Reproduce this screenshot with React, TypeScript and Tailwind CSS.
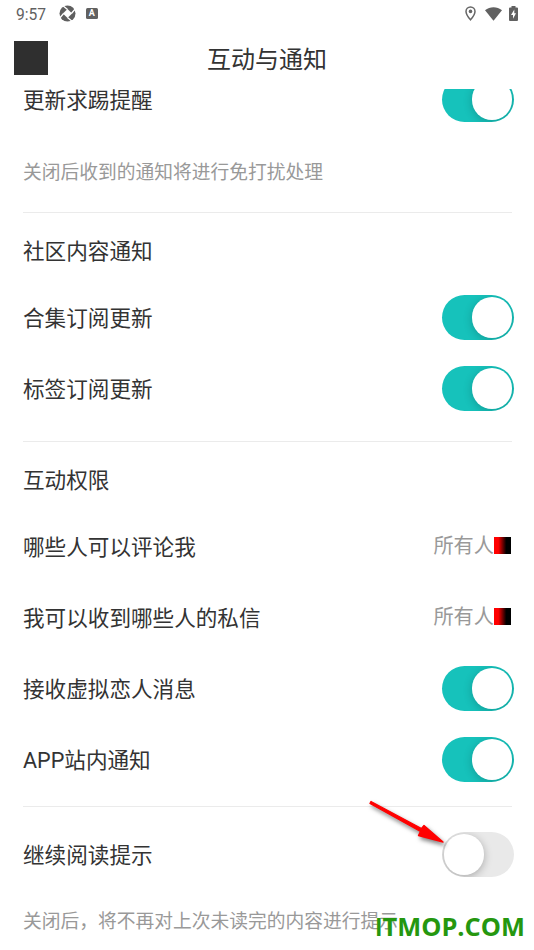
import React from "react";
import clsx from "clsx";

const Toggle: React.FC<{ defaultOn?: boolean }> = ({ defaultOn = false }) => {
  const [on, setOn] = React.useState(defaultOn);
  return (
    <button
      role="switch"
      aria-checked={on}
      onClick={() => setOn(!on)}
      className={clsx(
        "flex h-[44.5px] w-[72.5px] shrink-0 items-center overflow-hidden rounded-full px-[2px]",
        on ? "justify-end bg-[#16c2bb]" : "justify-start bg-[#e9e9e9]"
      )}
    >
      <span
        className={clsx(
          "size-[40.5px] rounded-full bg-white",
          on
            ? "shadow-[0_2px_10px_rgba(0,0,0,0.2)]"
            : "shadow-[0_2px_9px_rgba(0,0,0,0.28)]"
        )}
      />
    </button>
  );
};

const Row: React.FC<{ label: string; children: React.ReactNode }> = ({
  label,
  children,
}) => (
  <div className="flex h-[71px] shrink-0 items-center justify-between pr-[20px] pl-[23px]">
    <span className="pt-[2px] text-[21.6px] leading-5 text-[#333]">{label}</span>
    {children}
  </div>
);

const Choice: React.FC<{ value: string }> = ({ value }) => (
  <div className="mr-[3px] flex items-center">
    <span className="pb-px text-[20.2px] leading-7 text-[#999]">{value}</span>
    <span className="mb-[2px] size-[17px] bg-[linear-gradient(to_right,#ff0000_25%,#000_72%)]" />
  </div>
);

const Heading: React.FC<{ text: string }> = ({ text }) => (
  <div className="flex h-[69px] shrink-0 items-center pt-[9px] pl-[23px] text-[21.6px] text-[#333]">
    {text}
  </div>
);

const Divider = () => (
  <div className="mr-[22px] ml-[23px] h-px shrink-0 bg-[#ebebeb]" />
);

const StatusBar = () => (
  <div className="flex h-[27px] items-center pr-[16px] pl-[16px] text-[#616161]">
    <span className="w-[32px] pt-[2px] font-[Roboto] text-[15.6px] leading-6">9:57</span>
    <svg className="ml-[11px]" width="17" height="17" viewBox="0 0 17 17">
      <circle cx="8.5" cy="8.5" r="8" fill="#5f5f5f" />
      <path d="M8.5 3.900 13.100 8.500 8.500 13.100 3.900 8.500Z" fill="#fff" />
      <path
        d="M4 .8 8.500 4.600M16.200 4 12.400 8.500M13 16.200 8.500 12.400M.8 13 4.600 8.500"
        stroke="#fff"
        strokeWidth="1.3"
      />
    </svg>
    <span className="ml-[10px] flex size-[11.5px] items-center justify-center rounded-[1.5px] bg-[#616161] font-[Roboto] text-[9px] leading-none font-bold text-white">
      A
    </span>
    <svg className="mr-px ml-auto" width="11" height="15" viewBox="0 0 11 15">
      <path
        d="M5.5 1C2.900 1 1 3 1 5.400 1 8.600 5.500 13.800 5.500 13.800S10 8.600 10 5.400C10 3 8.100 1 5.500 1Z"
        fill="none"
        stroke="#666"
        strokeWidth="1.5"
      />
      <circle cx="5.5" cy="5.4" r="1.8" fill="#666" />
    </svg>
    <svg className="mr-[7px] ml-[8px]" width="17" height="14" viewBox="0 0 17 14">
      <path d="M0 3.200C5-.9 12-.9 17 3.200L8.500 13.800Z" fill="#616161" />
    </svg>
    <svg width="9" height="15" viewBox="0 0 9 15">
      <path
        d="M2.500 0h4v1.500H8a1 1 0 0 1 1 1V14a1 1 0 0 1-1 1H1a1 1 0 0 1-1-1V2.500a1 1 0 0 1 1-1h1.500Z"
        fill="#616161"
      />
      <path d="M5.300 3.500 2 9h2v3.800L7 7.300H5.300Z" fill="#fff" />
    </svg>
  </div>
);

const App: React.FC = () => {
  return (
    <div className="relative flex h-[950px] w-[534px] flex-col overflow-hidden bg-white font-[Roboto,'Noto_Sans_CJK_SC',sans-serif]">
      <StatusBar />
      <header className="grid h-[62px] shrink-0 grid-cols-[48px_1fr_48px] items-center">
        <span className="ml-[14px] size-[34px] bg-[#2f2f2f]" />
        <h1 className="pt-1 text-center text-[24px] text-[#333]">互动与通知</h1>
      </header>
      <main className="flex flex-1 flex-col overflow-hidden">
        <div className="-mt-[25px] flex flex-col">
          <Row label="更新求踢提醒">
            <Toggle defaultOn />
          </Row>
          <p className="mb-[6px] flex h-[71px] items-center pt-[5px] pl-[23px] text-[18.75px] text-[#999]">
            关闭后收到的通知将进行免打扰处理
          </p>
          <Divider />
          <Heading text="社区内容通知" />
          <Row label="合集订阅更新">
            <Toggle defaultOn />
          </Row>
          <Row label="标签订阅更新">
            <Toggle defaultOn />
          </Row>
          <div className="h-[17px]" />
          <Divider />
          <Heading text="互动权限" />
          <Row label="哪些人可以评论我">
            <Choice value="所有人" />
          </Row>
          <Row label="我可以收到哪些人的私信">
            <Choice value="所有人" />
          </Row>
          <Row label="接收虚拟恋人消息">
            <Toggle defaultOn />
          </Row>
          <Row label="APP站内通知">
            <Toggle defaultOn />
          </Row>
          <div className="h-[11px]" />
          <Divider />
          <div className="h-[12px]" />
          <Row label="继续阅读提示">
            <Toggle />
          </Row>
          <p className="flex h-[59px] items-center pt-[5px] pl-[23px] text-[18.75px] text-[#999]">
            关闭后，将不再对上次未读完的内容进行提示
          </p>
        </div>
      </main>

      {/* pointer towards the last switch */}
      <svg
        className="pointer-events-none absolute top-[790px] left-[360px] drop-shadow-[2px_3px_2px_rgba(0,0,0,0.5)]"
        width="100"
        height="70"
        viewBox="0 0 100 70"
      >
        <path
          d="M11 11.500 61.500 38.500 64 35.500 83 52 58.500 45.500 60.500 41.500 10 13.500Z"
          fill="#f00"
          stroke="#f00"
          strokeWidth="1.4"
          strokeLinejoin="round"
        />
      </svg>
      <span className="absolute top-[910px] left-[375px] font-['Open_Sans'] text-[25.4px] leading-8 font-bold whitespace-nowrap text-[#25970f]">
        <span className="font-[Lato]">I</span>TMOP.COM
      </span>
    </div>
  );
};

export default App;
